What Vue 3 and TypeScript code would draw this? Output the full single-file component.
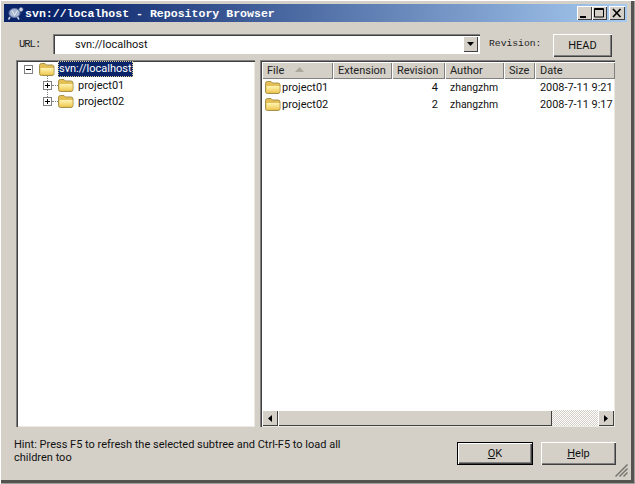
<script setup lang="ts">
const cols = [
  { name: 'File', w: 71 },
  { name: 'Extension', w: 59 },
  { name: 'Revision', w: 53 },
  { name: 'Author', w: 59 },
  { name: 'Size', w: 31 },
  { name: 'Date', w: 80 },
]
const rows = [
  { name: 'project01', rev: '4', author: 'zhangzhm', date: '2008-7-11 9:21' },
  { name: 'project02', rev: '2', author: 'zhangzhm', date: '2008-7-11 9:17' },
]
const folderBack = 'M.500 10.500V2.500a2 2 0 0 1 2-2h3.500l1.500 1.500h5.500a2 2 0 0 1 2 2v6.500a2 2 0 0 1-2 2h-10.500a2 2 0 0 1-2-2z'
const folderFront = 'M1.500 5h13v5.500a1 1 0 0 1-1 1h-11a1 1 0 0 1-1-1z'
</script>

<template>
  <div class="win">
    <svg class="defs" width="0" height="0">
      <defs>
        <linearGradient id="fg" x1="0" y1="0" x2="0" y2="1">
          <stop offset="0" stop-color="#fff4b4" />
          <stop offset="1" stop-color="#f0cb55" />
        </linearGradient>
      </defs>
    </svg>
    <div class="title">
      <svg class="turtle" width="17" height="15" viewBox="0 0 17 15">
        <ellipse cx="7.500" cy="7" rx="5.500" ry="4.500" fill="#a9b6cf" stroke="#5f74a6" />
        <path d="M5 4.500l2.500 5 3-5" fill="none" stroke="#e6ecf4" />
        <circle cx="14" cy="3.500" r="2" fill="#d5dbe2" stroke="#6d7f9c" stroke-width=".6" />
        <path d="M3 11l-1.500 2.500M10.500 11l1.500 2.500" stroke="#c4cedb" stroke-width="1.600" />
      </svg>
      <span class="title-text">svn://localhost - Repository Browser</span>
      <div class="caps">
        <div class="cap"><svg width="15" height="14" viewBox="0 0 15 14"><rect x="3" y="10" width="6" height="2" fill="#000" /></svg></div>
        <div class="cap"><svg width="15" height="14" viewBox="0 0 15 14"><path d="M2.500 2.500h9v8.500h-9zM2.500 3.500h9" fill="none" stroke="#000" /></svg></div>
        <div class="cap close"><svg width="16" height="14" viewBox="0 0 16 14"><path d="M4 3l7.500 8M11.500 3l-7.500 8" stroke="#000" stroke-width="1.700" /></svg></div>
      </div>
    </div>

    <div class="urlrow">
      <span class="mono url-label">URL:</span>
      <div class="combo">
        <span class="combo-text">svn://localhost</span>
        <div class="combo-btn"><svg width="7" height="4" viewBox="0 0 7 4"><path d="M0 0h7L3.500 4z" fill="#000" /></svg></div>
      </div>
      <span class="mono rev-label">Revision:</span>
      <div class="btn head">HEAD</div>
    </div>

    <div class="panes">
      <div class="sunken tree">
        <div class="node root">
          <span class="box"><i class="h"></i></span>
          <svg class="folder" width="16" height="13" viewBox="0 0 16 13"><path :d="folderBack" fill="#e3bf55" stroke="#a8924a" /><path :d="folderFront" fill="url(#fg)" /></svg>
          <span class="sel">svn://localhost</span>
        </div>
        <div v-for="r in rows" :key="r.name" class="node child">
          <span class="box"><i class="h"></i><i class="v"></i></span>
          <span class="dots"></span>
          <svg class="folder" width="16" height="13" viewBox="0 0 16 13"><path :d="folderBack" fill="#e3bf55" stroke="#a8924a" /><path :d="folderFront" fill="url(#fg)" /></svg>
          <span class="lbl">{{ r.name }}</span>
        </div>
      </div>

      <div class="sunken list">
        <div class="head-row">
          <div v-for="c in cols" :key="c.name" class="hcell" :style="{ width: c.w + 'px' }">
            {{ c.name }}
            <svg v-if="c.name === 'File'" class="sort" width="9" height="5" viewBox="0 0 9 5"><path d="M4.500 0L9 5H0z" fill="#aca899" /></svg>
          </div>
        </div>
        <div class="body">
          <div v-for="r in rows" :key="r.name" class="row">
            <div class="cell name" :style="{ width: cols[0].w + cols[1].w + 'px' }">
              <svg class="folder" width="16" height="13" viewBox="0 0 16 13"><path :d="folderBack" fill="#e3bf55" stroke="#a8924a" /><path :d="folderFront" fill="url(#fg)" /></svg>
              <span class="nm">{{ r.name }}</span>
            </div>
            <div class="cell rev" :style="{ width: cols[2].w + 'px' }">{{ r.rev }}</div>
            <div class="cell auth" :style="{ width: cols[3].w + cols[4].w + 'px' }">{{ r.author }}</div>
            <div class="cell date" :style="{ width: cols[5].w - 1 + 'px' }">{{ r.date }}</div>
          </div>
        </div>
        <div class="scroll">
          <div class="sb-btn"><svg width="4" height="7" viewBox="0 0 4 7"><path d="M4 0v7L0 3.500z" fill="#000" /></svg></div>
          <div class="thumb"></div>
          <div class="track"></div>
          <div class="sb-btn"><svg width="4" height="7" viewBox="0 0 4 7"><path d="M0 0v7l4-3.500z" fill="#000" /></svg></div>
        </div>
      </div>
    </div>

    <div class="foot">
      <p class="hint">Hint: Press F5 to refresh the selected subtree and Ctrl-F5 to load all children too</p>
      <div class="btn ok"><span><u>O</u>K</span></div>
      <div class="btn help"><span><u>H</u>elp</span></div>
    </div>

    <svg class="grip" width="13" height="13" viewBox="0 0 13 13"><path d="M12.500 .500L.500 12.500M12.500 4.500L4.500 12.500M12.500 8.500L8.500 12.500" stroke="#77756e" stroke-width="1.500" /></svg>
  </div>
</template>

<style scoped>
.win {
  position: relative;
  box-sizing: border-box;
  width: 635px;
  height: 484px;
  display: flex;
  flex-direction: column;
  padding: 4px 8px 7px 4px;
  background: #d4d0c8;
  box-shadow: inset 1px 1px 0 #fff, inset -1px -1px 0 #a09e98, inset -4px -4px 0 #55534f;
  font-family: Roboto, "Liberation Sans", sans-serif;
  font-size: 11px;
  color: #111;
  overflow: hidden;
}
.defs { position: absolute; }
.title {
  flex: none;
  height: 18px;
  display: flex;
  align-items: center;
  background: linear-gradient(90deg, #0a246a 0%, #0a246a 8%, #a6caf0 100%);
  color: #fff;
}
.turtle { margin-left: 3px; flex: none; }
.title-text {
  margin-left: 1px;
  font-family: "Liberation Mono", monospace;
  font-weight: 700;
  font-size: 11.57px;
  white-space: pre;
}
.caps { margin-left: auto; display: flex; margin-right: 2px; }
.cap {
  width: 15px;
  height: 14px;
  background: #d4d0c8;
  box-shadow: inset 1px 1px 0 #fff, inset -1px -1px 0 #404040;
}
.cap svg { display: block; }
.close { width: 16px; margin-left: 2px; }
.urlrow {
  flex: none;
  height: 38px;
  display: flex;
  align-items: flex-start;
  padding-top: 12px;
  box-sizing: border-box;
}
.mono {
  font-family: "Liberation Mono", monospace;
  font-size: 9.7px;
  color: #222;
}
.url-label { margin-left: 15px; width: 34px; line-height: 20px; font-size: 10.500px; letter-spacing: -1px; }
.combo {
  width: 427px;
  height: 20px;
  box-sizing: border-box;
  background: #fff;
  box-shadow: inset 1px 1px 0 #808080, inset 2px 2px 0 #404040;
  display: flex;
  align-items: center;
}
.combo-text { margin-left: 22px; font-size: 11px; }
.combo-btn {
  margin-left: auto;
  margin-right: 2px;
  width: 15px;
  height: 16px;
  background: #d4d0c8;
  box-shadow: inset 1px 1px 0 #fff, inset -1px -1px 0 #404040;
  display: flex;
  align-items: center;
  justify-content: center;
}
.rev-label { margin-left: 9px; width: 64px; line-height: 20px; }
.btn {
  box-sizing: border-box;
  background: #d4d0c8;
  box-shadow: inset 1px 1px 0 #fff, inset -1px -1px 0 #404040, inset -2px -2px 0 #808080;
  display: flex;
  align-items: center;
  justify-content: center;
  font-size: 11px;
}
.head { width: 59px; height: 23px; }
.panes {
  flex: none;
  height: 367px;
  display: flex;
  margin-left: 12px;
  gap: 5px;
}
.sunken {
  box-sizing: border-box;
  background: #fff;
  box-shadow: inset 1px 1px 0 #808080, inset 2px 2px 0 #404040, inset -1px -1px 0 #ece9e2;
  height: 367px;
  overflow: hidden;
}
.tree { width: 239px; padding: 1px 0 0 8px; }
.node { display: flex; align-items: center; height: 16px; position: relative; font-size: 11px; }
.box {
  position: relative;
  z-index: 1;
  width: 9px;
  height: 9px;
  box-sizing: border-box;
  border: 1px solid #808080;
  background: #fff;
  flex: none;
}
.box .h { position: absolute; left: 1px; right: 1px; top: 3px; height: 1px; background: #000; }
.box .v { position: absolute; top: 1px; bottom: 1px; left: 3px; width: 1px; background: #000; }
.root .box { margin-right: 6px; }
.root .sel {
  margin-left: 3px;
  background: #0a246a;
  color: #fff;
  padding: 0 1px;
  outline: 1px dotted #d8c890;
  outline-offset: -1px;
  line-height: 16px;
}
.child { padding-left: 19px; }
.child::before {
  content: "";
  position: absolute;
  left: 23px;
  top: -1px;
  height: 5px;
  border-left: 1px dotted #808080;
}
.child + .child::before { top: -8px; height: 12px; }
.child .dots { width: 6px; border-top: 1px dotted #808080; flex: none; }
.lbl { margin-left: 4px; }
.folder { flex: none; }
.list { width: 355px; display: flex; flex-direction: column; padding: 2px 0 1px 2px; }
.head-row { display: flex; height: 17px; flex: none; }
.hcell {
  flex: none;
  box-sizing: border-box;
  background: #d4d0c8;
  box-shadow: inset 1px 1px 0 #fff, inset -1px -1px 0 #808080;
  padding-left: 5px;
  font-size: 11px;
  line-height: 17px;
  white-space: nowrap;
  overflow: hidden;
  color: #222;
}
.sort { margin-left: 8px; vertical-align: 2px; }
.body { flex: 1; }
.row { display: flex; height: 17px; align-items: center; font-size: 11px; }
.cell { flex: none; box-sizing: border-box; white-space: nowrap; overflow: hidden; }
.name { display: flex; align-items: center; padding-left: 3px; }
.nm { margin-left: 1px; }
.rev { text-align: right; padding-right: 7px; }
.auth { padding-left: 5px; font-size: 10.4px; }
.date { padding-left: 5px; font-size: 10.9px; }
.scroll { flex: none; height: 16px; display: flex; margin-right: 1px; }
.sb-btn {
  width: 16px;
  height: 16px;
  background: #d4d0c8;
  box-shadow: inset 1px 1px 0 #fff, inset -1px -1px 0 #404040;
  display: flex;
  align-items: center;
  justify-content: center;
  flex: none;
}
.thumb {
  width: 274px;
  background: #d4d0c8;
  box-shadow: inset 1px 1px 0 #fff, inset -1px -1px 0 #404040;
  flex: none;
}
.track {
  flex: 1;
  background: repeating-conic-gradient(#d4d0c8 0 25%, #fff 0 50%) 0 0 / 2px 2px;
}
.foot {
  flex: 1;
  display: flex;
  align-items: flex-start;
}
.hint {
  margin: 11px 0 0 10px;
  width: 345px;
  line-height: 13px;
  font-size: 11px;
}
.btn.ok {
  width: 74px;
  height: 21px;
  margin: 16px 0 0 99px;
  box-shadow: 0 0 0 1px #000, inset 1px 1px 0 #fff, inset -1px -1px 0 #404040, inset -2px -2px 0 #808080;
}
.btn.help {
  width: 75px;
  height: 23px;
  margin: 15px 0 0 9px;
}
.grip { position: absolute; right: 7px; bottom: 7px; }
</style>
